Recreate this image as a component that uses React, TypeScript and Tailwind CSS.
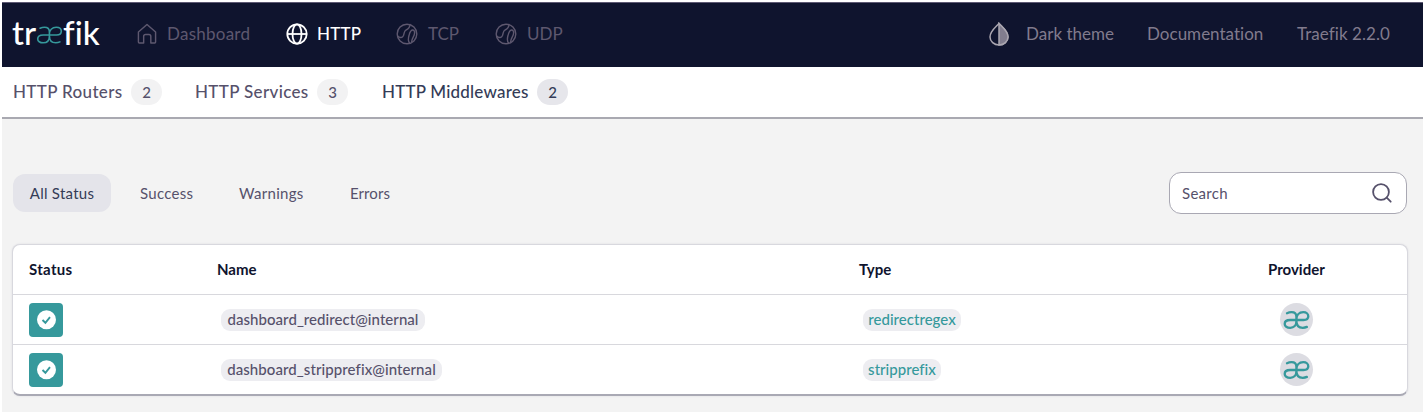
import React from "react";

const font = "font-['Lato','Open_Sans',sans-serif]";

function Ae({ className }: { className: string }) {
  return (
    <svg viewBox="0 0 26 18" className={className} fill="none" stroke="currentColor" strokeLinecap="round" strokeLinejoin="round">
      <path d="M3.500 2.200C5 1.500 6.500 1.200 8 1.200c3.400 0 4.900 1.800 4.900 4.600v4.400c0 4-2.400 6.600-6.200 6.600-3.300 0-5.500-1.500-5.500-3.900C1.200 10.200 3.300 9 6.700 9H20c3.100 0 4.800-1.400 4.800-3.700 0-2.600-2-4.100-5-4.100-4.300 0-6.900 2.900-6.900 7.300v1.500c0 4.300 2.300 6.800 6.300 6.800 1.700 0 3-.3 4.200-.9" />
    </svg>
  );
}

function Ball() {
  return (
    <svg viewBox="0 0 22 22" className="h-[22px] w-[22px] shrink-0" fill="none" stroke="currentColor" strokeWidth="1.4" strokeLinecap="round">
      <circle cx="11" cy="11" r="9.800" />
      <path d="M1.500 13c2.500 2.500 5 1.800 6-.6 1-2.600.5-4.200 2.500-5.400 2-1 4-2 4-5.500" />
      <path d="M13.500 20c-1.500-2-1.300-5-.4-8 .9-3.300 2-5 3.700-5 2 0 2.200 3 1.200 5.500-.9 2.200-2 3-2.300 6" />
    </svg>
  );
}

function Count({ n, active = false }: { n: number; active?: boolean }) {
  return <span className={`flex h-[26px] w-[31px] items-center justify-center rounded-full text-[15px] ${active ? "bg-[#e6e6eb] text-[#343c57]" : "bg-[#f2f2f3]"}`}>{n}</span>;
}

const rows = [
  { name: "dashboard_redirect@internal", nameClass: "w-[204px] tracking-[0.05px]", type: "redirectregex", typeClass: "w-[98px] tracking-[0.02px]" },
  { name: "dashboard_stripprefix@internal", nameClass: "w-[221px] tracking-[0.08px]", type: "stripprefix", typeClass: "w-[78px] tracking-[0.02px]" },
];

export default function App() {
  return (
    <div className={`h-[414px] w-[1425px] overflow-hidden bg-white pt-[2px] pr-[2px] pl-[2px] whitespace-nowrap ${font}`}>
      <header className="flex h-[65px] items-center border-t border-[#5d5973] bg-[#0f142e] pb-[3px] text-[17px] text-[#5e586f]">
        <div className="ml-[10px] flex h-[40px] w-[92px] items-center text-[33px] leading-[40px] font-medium text-white [font-variant-ligatures:none]">
          <span className="w-[24px] pb-[3px]">tr</span>
          <Ae className="mt-[3px] h-[18px] w-[27px] stroke-[1.600px] text-[#36999c]" />
          <span className="w-[39px] pb-[3px]">fik</span>
        </div>
        <nav className="flex items-center">
          <div className="ml-[33px] flex w-[149px] items-center">
            <svg viewBox="0 0 20 22" className="mr-[10px] h-[21px] w-[20px]" fill="none" stroke="currentColor" strokeWidth="1.500" strokeLinejoin="round">
              <path d="M1 9.500 10 1.500l9 8V20a1 1 0 0 1-1 1h-4v-7a2 2 0 0 0-2-2H8.500a2 2 0 0 0-2 2v7H2a1 1 0 0 1-1-1Z" />
            </svg>
            <span className="tracking-[0.25px]">Dashboard</span>
          </div>
          <div className="flex w-[110px] items-center text-white">
            <svg viewBox="0 0 22 22" className="mr-[9px] h-[22px] w-[22px]" fill="none" stroke="currentColor" strokeWidth="1.800">
              <circle cx="11" cy="11" r="9.700" /><ellipse cx="11" cy="11" rx="4.500" ry="9.700" /><path d="M1.300 11h19.400" />
            </svg>
            <span className="font-medium tracking-[0.2px]">HTTP</span>
          </div>
          <div className="flex w-[99px] items-center gap-[10px]"><Ball /><span>TCP</span></div>
          <div className="flex items-center gap-[10px]"><Ball /><span>UDP</span></div>
        </nav>
        <div className="ml-auto flex items-center text-[#817b8d]">
          <svg viewBox="0 0 20 24" className="mr-[17px] h-[24px] w-[20px]" fill="none" stroke="#aaa6b0" strokeWidth="1.500">
            <path d="M10 1.500C7 5 1 9 1 15a9 8 0 0 0 18 0c0-6-6-10-9-13.500Z" /><path d="M10 1.500C13 5 19 9 19 15a9 8 0 0 1-9 8Z" fill="#817d8e" />
          </svg>
          <span className="w-[121px] tracking-[0.02px]">Dark theme</span>
          <span className="w-[150px] tracking-[0.02px]">Documentation</span>
          <span className="w-[126px] tracking-[0.06px]">Traefik 2.2.0</span>
        </div>
      </header>
      <nav className="flex h-[52px] items-center border-b-2 border-[#a9a9b1] pl-[11px] text-[17px] font-medium text-[#56516b]">
        <span className="w-[118px] tracking-[0.35px]">HTTP Routers</span><Count n={2} />
        <span className="ml-[33px] w-[122px] tracking-[0.35px]">HTTP Services</span><Count n={3} />
        <span className="ml-[34px] w-[155px] tracking-[0.2px] text-[#343c57]">HTTP Middlewares</span><Count n={2} active />
      </nav>
      <main className="h-[293px] bg-[#f3f3f3] pt-[53px] pr-[16px] pl-[11px]">
        <div className="flex h-[42px] items-center justify-between text-[15px] text-[#56516b]">
          <div className="flex items-center">
            <span className="flex h-[38px] w-[98px] items-center justify-center rounded-[12px] bg-[#e4e4ea] tracking-[0.25px] text-[#343c57]">All Status</span>
            <span className="ml-[29px] w-[99px] tracking-[0.3px]">Success</span>
            <span className="w-[111px] tracking-[0.3px]">Warnings</span>
            <span className="tracking-[0.1px]">Errors</span>
          </div>
          <div className="flex h-[42px] w-[238px] items-center justify-between rounded-[12px] border border-[#a9a8b3] bg-white pr-[14px] pl-[12px]">
            <span className="tracking-[0.3px]">Search</span>
            <svg viewBox="0 0 20 20" className="h-[20px] w-[20px]" fill="none" stroke="currentColor" strokeWidth="1.800" strokeLinecap="round"><circle cx="9" cy="9" r="7.900" /><path d="m14.700 14.700 4 4" /></svg>
          </div>
        </div>
        <section className="-ml-px mt-[30px] flex h-[152px] w-[1396px] flex-col rounded-[8px] border border-b-2 border-[#d8d8de] border-b-[#a9a9b4] bg-white shadow-[0_0_2px_#d8d8de]">
          <div className="flex h-[49px] items-center pl-[16px] text-[15px] font-bold text-[#0f142e]">
            <span className="w-[188px] tracking-[0.3px]">Status</span><span className="w-[642px]">Name</span><span className="w-[409px]">Type</span><span>Provider</span>
          </div>
          {rows.map((r) => (
            <div key={r.name} className="flex h-[50px] items-center border-t border-[#d8d8dd] pl-[16px] text-[15px] font-medium text-[#56516b]">
              <div className="mr-[158px] flex h-[34px] w-[34px] items-center justify-center rounded-[4px] bg-[#36999c]">
                <svg viewBox="0 0 20 20" className="h-[20px] w-[20px]"><circle cx="10.500" cy="9.800" r="9.500" fill="white" /><path d="m6.500 10 2.900 2.800 4.600-5.600" fill="none" stroke="#36999c" strokeWidth="1.900" /></svg>
              </div>
              <div className="w-[642px]"><span className={`flex h-[22px] items-center justify-center rounded-[9px] bg-[#ededf1] ${r.nameClass}`}>{r.name}</span></div>
              <div className="w-[417px]"><span className={`flex h-[22px] items-center justify-center rounded-[9px] bg-[#ededf1] text-[#36999c] ${r.typeClass}`}>{r.type}</span></div>
              <div className="flex h-[33px] w-[33px] items-center justify-center rounded-full bg-[#dcdce2]"><Ae className="h-[18px] w-[27px] stroke-[2.300px] text-[#36999c]" /></div>
            </div>
          ))}
        </section>
      </main>
    </div>
  );
}
